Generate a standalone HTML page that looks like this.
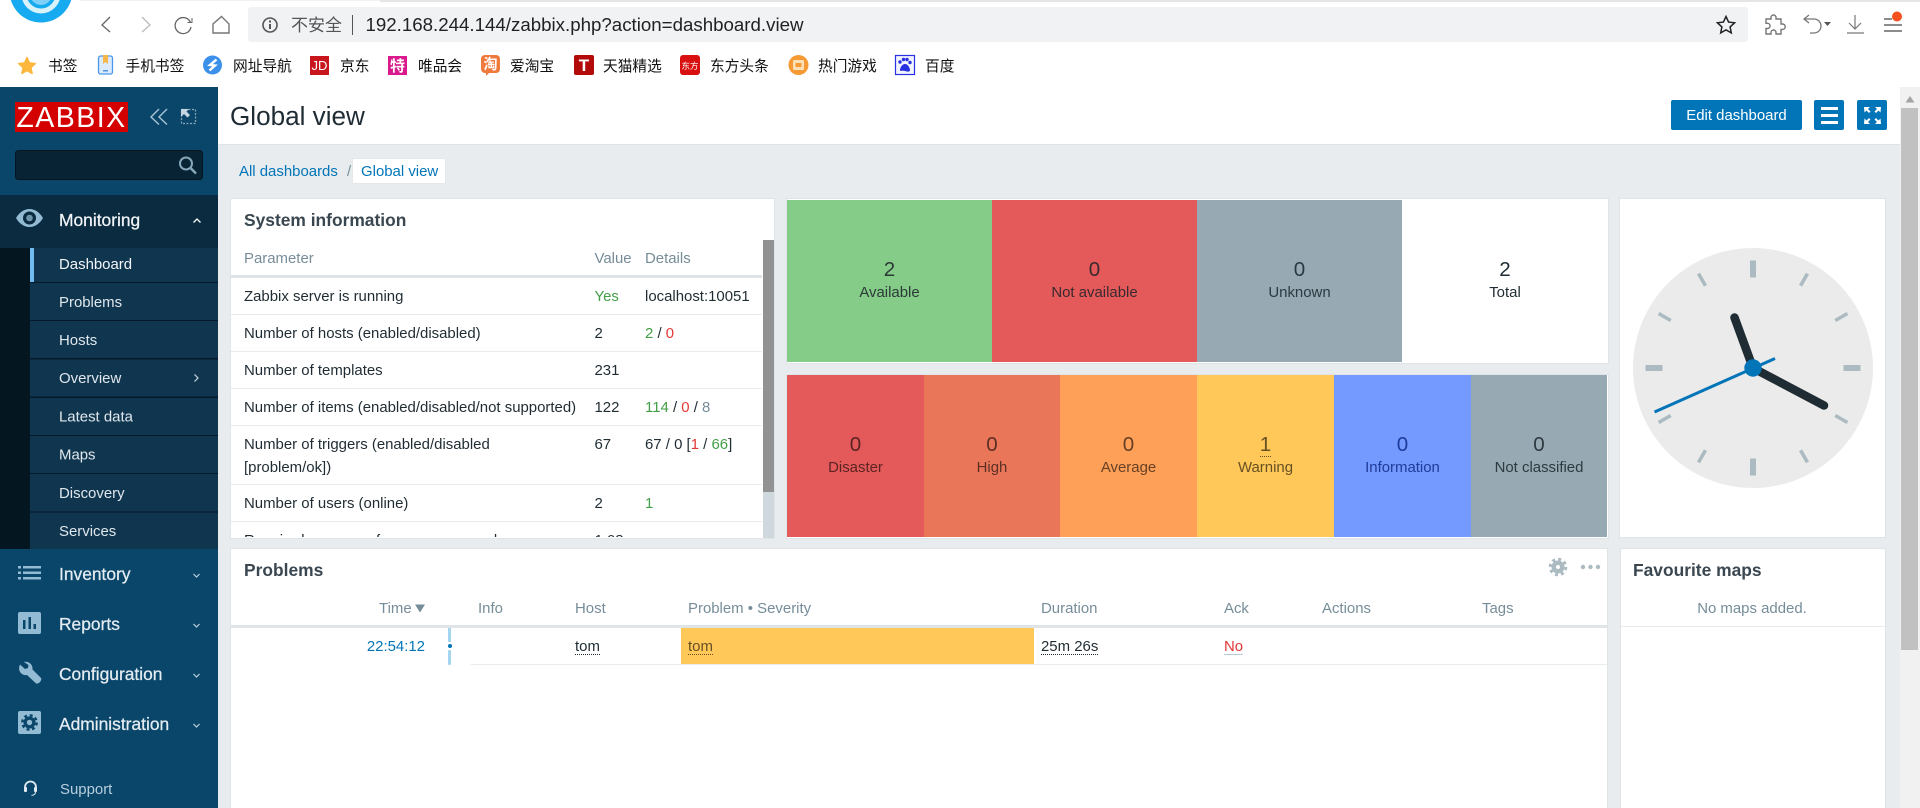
<!DOCTYPE html>
<html><head><meta charset="utf-8"><title>Global view</title>
<style>
html,body{margin:0;padding:0;width:1920px;height:808px;overflow:hidden;background:#fff}
svg{display:block;position:absolute;left:0;top:0}
text{font-family:"Liberation Sans","Noto Sans CJK SC",sans-serif;font-size:14.95px;fill:#1f2c33}
.nav{fill:#dfe7ec}
.big{font-size:17.4px;fill:#e4ecf1;stroke:#e4ecf1;stroke-width:.25px}
.h{fill:#768d99}
.b{font-size:17.4px;font-weight:bold;fill:#3a4750}
.l{fill:#0275b8}
.g{fill:#429e47}
.r{fill:#e33734}
.bm{font-size:14.7px;fill:#111}
.c{text-anchor:middle}
.n{font-size:20.6px}
</style></head><body>
<svg width="1920" height="808" viewBox="0 0 1920 808" xmlns="http://www.w3.org/2000/svg">
<defs>
<clipPath id="sc"><rect x="231" y="199" width="542" height="338"/></clipPath>
</defs>
<rect width="1920" height="808" fill="#fff"/>

<!-- browser chrome -->
<rect x="380" y="0" width="1540" height="2" fill="#e5e5e5"/>
<rect x="80" y="0" width="300" height="1" fill="#f2f2f2"/>
<circle cx="41" cy="-9" r="31.5" fill="#16aaf0"/>
<circle cx="41" cy="-6" r="17" fill="none" stroke="#d8f2fc" stroke-width="5"/>
<circle cx="41" cy="-6" r="11" fill="#7fd0f6"/>
<polyline points="110,17 102,25 110,32" fill="none" stroke="#666" stroke-width="1.3"/>
<polyline points="142,17 150,25 142,32" fill="none" stroke="#bbb" stroke-width="1.3"/>
<path d="M190.500 22.500A8 8 0 1 0 191 27" fill="none" stroke="#666" stroke-width="1.3"/>
<path d="M187.500 22.500h4.500v-4.500" fill="none" stroke="#666" stroke-width="1"/>
<path d="M213 33V24L221.500 16.500 229 24V33Z" fill="none" stroke="#777" stroke-width="1.400"/>
<rect x="248" y="7" width="1500" height="35" rx="3" fill="#f0f2f4"/>
<circle cx="270" cy="25" r="7" fill="none" stroke="#555" stroke-width="1.600"/>
<rect x="269" y="24" width="2" height="5" fill="#555"/><rect x="269" y="20.500" width="2" height="2" fill="#555"/>
<text x="291" y="31" style="font-size:17px;fill:#555">不安全</text>
<rect x="352" y="15" width="1" height="20" fill="#555"/>
<text x="365.500" y="31" textLength="438" lengthAdjust="spacingAndGlyphs" style="font-size:18.2px;fill:#222">192.168.244.144/zabbix.php?action=dashboard.view</text>
<path d="M1726 16.500l2.600 5.600 6 .7-4.500 4.100 1.200 6-5.300-3-5.300 3 1.200-6-4.500-4.100 6-.7z" fill="none" stroke="#222" stroke-width="1.500"/>
<path d="M1771 17.500a2.500 2.500 0 0 1 5 0v1.500h5v5h1.500a2.700 2.700 0 0 1 0 5.400H1781V34h-5v-1.500a2.500 2.500 0 0 0-5 0V34h-5v-5.500h1.500a2.600 2.600 0 0 0 0-5.200H1766V19h5z" fill="none" stroke="#777" stroke-width="1.400"/>
<path d="M1804 19h10a7 7 0 0 1 0 14h-4M1809 15l-5 4 5 4" fill="none" stroke="#777" stroke-width="1.300"/>
<path d="M1824 22h7l-3.500 4z" fill="#555"/>
<path d="M1855 15v14M1849 23l6 6 6-6M1847 33h17" fill="none" stroke="#777" stroke-width="1.200"/>
<path d="M1884 19h8M1884 25h18M1884 31h18" stroke="#666" stroke-width="1.400" fill="none"/>
<circle cx="1897" cy="16.500" r="5" fill="#f4511e"/>

<!-- bookmarks -->
<path d="M27 57.500l2.400 5.400 5.900.7-4.400 4 1.200 5.900-5.100-3-5.100 3 1.200-5.900-4.400-4 5.900-.7z" fill="#fcb73c" stroke="#fcb73c" stroke-width="1.500" stroke-linejoin="round"/>
<text class="bm" x="48" y="71">书签</text>
<rect x="98.500" y="56" width="14" height="18" rx="2" fill="#dbeafd" stroke="#4b97ea" stroke-width="1.300"/>
<path d="M103 55h5v9l-2.500-2-2.500 2z" fill="#f7b64a"/><rect x="103" y="70" width="5" height="1.500" fill="#4b97ea"/>
<text class="bm" x="125.500" y="71">手机书签</text>
<circle cx="212.500" cy="65" r="9.500" fill="#3b90ea"/>
<path d="M216.500 59.500l-6.500 5.500 5 .5-5.500 5" fill="none" stroke="#fff" stroke-width="2.400"/>
<text class="bm" x="233" y="71">网址导航</text>
<rect x="310" y="56" width="19" height="19" fill="#c8161e"/>
<text x="319.500" y="70" class="c" style="font-size:13px;fill:#fff">JD</text>
<text class="bm" x="340" y="71">京东</text>
<rect x="388" y="56" width="19" height="19" fill="#d9198c"/>
<text x="397.500" y="71" class="c" style="font-size:15px;font-weight:bold;fill:#fff">特</text>
<text class="bm" x="418" y="71">唯品会</text>
<rect x="481" y="55" width="19" height="18" rx="4" fill="#f0793c"/><path d="M486 72v4l4-4z" fill="#f0793c"/>
<text x="490.500" y="69" class="c" style="font-size:14px;font-weight:bold;fill:#fff">淘</text>
<text class="bm" x="510" y="71">爱淘宝</text>
<rect x="574" y="55" width="20" height="20" rx="2" fill="#b30a0a"/>
<text x="584" y="71" class="c" style="font-size:17px;font-weight:bold;fill:#fff">T</text>
<text class="bm" x="603" y="71">天猫精选</text>
<rect x="680" y="55" width="20" height="20" rx="3" fill="#d81010"/>
<text x="690" y="69" class="c" style="font-size:8.500px;fill:#fff">东方</text>
<text class="bm" x="710" y="71">东方头条</text>
<circle cx="798.500" cy="65" r="10" fill="#f59a34"/><rect x="793" y="60" width="11" height="10" rx="1" fill="#fbe0b8"/><rect x="795.500" y="63" width="6" height="4" fill="#f59a34"/>
<text class="bm" x="818" y="71">热门游戏</text>
<rect x="895.500" y="55.500" width="19" height="19" fill="#f2f4ff" stroke="#2932e1" stroke-width="1.200"/>
<path d="M905 64c3 0 5 4 5 6s-2 2-5 1-5 1-5-1 2-6 5-6z" fill="#2932e1"/><circle cx="900" cy="62" r="1.700" fill="#2932e1"/><circle cx="903.500" cy="59.500" r="1.700" fill="#2932e1"/><circle cx="907" cy="59.500" r="1.700" fill="#2932e1"/><circle cx="910" cy="62.500" r="1.700" fill="#2932e1"/>
<text class="bm" x="925" y="71">百度</text>

<!-- main bg -->
<rect x="218" y="144" width="1682" height="664" fill="#e9ecef"/>
<rect x="218" y="144" width="1682" height="1" fill="#dfe4e7"/>

<!-- sidebar -->
<rect x="0" y="87" width="218" height="721" fill="#0a466a"/>
<rect x="0" y="195" width="218" height="54" fill="#0a2b40"/>
<rect x="0" y="248" width="30" height="301" fill="#04161f"/>
<rect x="30" y="248" width="188" height="301" fill="#10354f"/>
<rect x="30" y="248" width="4" height="34" fill="#72bdf0"/>
<g fill="#06192a">
<rect x="30" y="282" width="188" height="1"/><rect x="30" y="320" width="188" height="1"/><rect x="30" y="358" width="188" height="1.500"/><rect x="30" y="396.500" width="188" height="1.500"/><rect x="30" y="435" width="188" height="1"/><rect x="30" y="473" width="188" height="1"/><rect x="30" y="511.500" width="188" height="1"/>
</g>
<rect x="15" y="102" width="113" height="30" fill="#d40000"/>
<text x="71.500" y="127" class="c" style="font-size:28.500px;fill:#fff;letter-spacing:1.500px">ZABBIX</text>
<path d="M159 109l-8 8 8 7.500M167 109l-8 8 8 7.500" fill="none" stroke="#a9c4d6" stroke-width="1.400"/>
<rect x="181.500" y="109.500" width="14" height="14" fill="none" stroke="#8aa8bb" stroke-width="1.200" stroke-dasharray="2 1.500"/>
<path d="M181 109h8l-2.500 2.500 3.500 3.500-2.500 2.500-3.500-3.500-3 3z" fill="#c5d6e2"/>
<rect x="15.500" y="150.500" width="187" height="29" rx="3" fill="#082434" stroke="#04151f"/>
<circle cx="186" cy="163.500" r="6" fill="none" stroke="#86a6b9" stroke-width="2"/><path d="M190.500 168l5.500 5.500" stroke="#86a6b9" stroke-width="2.500"/>

<path d="M16 218C23 206 36 206 43 218C36 230 23 230 16 218Z" fill="#93bcd4"/>
<circle cx="29.500" cy="218" r="6.500" fill="#0a2b40"/><circle cx="29.500" cy="218" r="3.300" fill="#6f95ab"/>
<text class="big" x="59" y="226" style="fill:#f2f5f7;stroke:#f2f5f7">Monitoring</text>
<path d="M193.500 222.500l3.500-3.500 3.500 3.500" fill="none" stroke="#fff" stroke-width="1.300"/>
<text x="59" y="269" style="fill:#f2f5f7">Dashboard</text>
<text class="nav" x="59" y="307">Problems</text>
<text class="nav" x="59" y="345">Hosts</text>
<text class="nav" x="59" y="383">Overview</text>
<path d="M194.500 374.500l3.500 3.500-3.500 3.500" fill="none" stroke="#cfdbe3" stroke-width="1.200"/>
<text class="nav" x="59" y="421.500">Latest data</text>
<text class="nav" x="59" y="459.500">Maps</text>
<text class="nav" x="59" y="498">Discovery</text>
<text class="nav" x="59" y="536">Services</text>

<g fill="#93bcd4">
<rect x="18" y="566" width="3" height="2.500"/><rect x="18" y="571.500" width="3" height="2.500"/><rect x="18" y="577" width="3" height="2.500"/>
<rect x="23" y="566" width="18" height="2.500"/><rect x="23" y="571.500" width="18" height="2.500"/><rect x="23" y="577" width="18" height="2.500"/>
<rect x="18" y="612" width="23" height="22" rx="2"/>
<rect x="18" y="711" width="23" height="23" rx="2"/>
<path d="M20 664.500L25 669 28 668 28.500 665 24 662C28 661 33 664 32.500 669.500L41 678Q42 680 39.500 682.500 37 684.500 35.500 683L27 675C22 676 17 671 20 664.500Z"/>
</g>
<g fill="#0a466a"><rect x="23" y="620" width="2.500" height="9"/><rect x="28.500" y="617" width="2.500" height="12"/><rect x="33.500" y="624" width="2.500" height="5"/></g>
<circle cx="29.500" cy="722.500" r="6" fill="#0a466a"/>
<circle cx="29.500" cy="722.500" r="7.200" fill="none" stroke="#0a466a" stroke-width="2.400" stroke-dasharray="3 2.650"/>
<circle cx="29.500" cy="722.500" r="2.700" fill="#93bcd4"/>
<text class="big" x="59" y="580">Inventory</text>
<text class="big" x="59" y="630">Reports</text>
<text class="big" x="59" y="680">Configuration</text>
<text class="big" x="59" y="730">Administration</text>
<g fill="none" stroke="#bcd0dc" stroke-width="1.200">
<path d="M193.500 574l3 3 3-3"/><path d="M193.500 624l3 3 3-3"/><path d="M193.500 674l3 3 3-3"/><path d="M193.500 724l3 3 3-3"/>
</g>
<path d="M25 790v-3a5.500 5.500 0 0 1 11 0v3" fill="none" stroke="#e2ebf1" stroke-width="1.800"/>
<rect x="24" y="787" width="3" height="5" rx="1" fill="#e2ebf1"/><rect x="34" y="787" width="3" height="5" rx="1" fill="#e2ebf1"/><path d="M35.500 792q0 3-4 3.500" fill="none" stroke="#e2ebf1" stroke-width="1"/>
<text x="60" y="794" style="fill:#b7cede">Support</text>

<!-- header -->
<text x="230" y="125" style="font-size:26.100px;fill:#1f2c33">Global view</text>
<rect x="1671" y="100" width="131" height="30" rx="2" fill="#0275b8"/>
<text x="1736.500" y="120" class="c" style="fill:#fff">Edit dashboard</text>
<rect x="1814" y="100" width="30" height="30" rx="2" fill="#0275b8"/>
<rect x="1821" y="107" width="17" height="3" fill="#fff"/><rect x="1821" y="114" width="17" height="3" fill="#fff"/><rect x="1821" y="121" width="17" height="3" fill="#fff"/>
<rect x="1857" y="100" width="30" height="30" rx="2" fill="#0275b8"/>
<g fill="#fff">
<path d="M1864 107h6l-2 2 2.500 2.500-1.500 1.500-2.500-2.500-2 2z"/>
<path d="M1881 107h-6l2 2-2.500 2.500 1.500 1.500 2.500-2.500 2 2z"/>
<path d="M1864 124h6l-2-2 2.500-2.500-1.500-1.500-2.500 2.500-2-2z"/>
<path d="M1881 124h-6l2-2-2.500-2.500 1.500-1.500 2.500 2.500 2-2z"/>
</g>
<!-- page scrollbar -->
<rect x="1900" y="87" width="20" height="721" fill="#f1f1f1"/>
<path d="M1905.500 102.500h9l-4.500-6.500z" fill="#a3a3a3"/>
<rect x="1901" y="108" width="17" height="542" fill="#c1c1c1"/>

<!-- breadcrumbs -->
<text class="l" x="239" y="176">All dashboards</text>
<text x="347" y="176" style="fill:#768d99">/</text>
<rect x="352.500" y="158.500" width="93" height="25" rx="1" fill="#fff" stroke="#e4e8ea"/>
<text class="l" x="361" y="176">Global view</text>

<!-- System information -->
<rect x="230.500" y="198.500" width="544" height="340" fill="#fff" stroke="#dfe4e7"/>
<text class="b" x="244" y="226">System information</text>
<g clip-path="url(#sc)">
<text class="h" x="244" y="263">Parameter</text><text class="h" x="594.500" y="263">Value</text><text class="h" x="645" y="263">Details</text>
<rect x="231" y="275" width="531" height="3" fill="#dfe4e7"/>
<g fill="#e9ecef"><rect x="231" y="314" width="531" height="1"/><rect x="231" y="351" width="531" height="1"/><rect x="231" y="388" width="531" height="1"/><rect x="231" y="425" width="531" height="1"/><rect x="231" y="484" width="531" height="1"/><rect x="231" y="521" width="531" height="1"/></g>
<text x="244" y="301">Zabbix server is running</text><text class="g" x="594.500" y="301">Yes</text><text x="645" y="301">localhost:10051</text>
<text x="244" y="338">Number of hosts (enabled/disabled)</text><text x="594.500" y="338">2</text><text x="645" y="338"><tspan class="g">2</tspan> / <tspan class="r">0</tspan></text>
<text x="244" y="375">Number of templates</text><text x="594.500" y="375">231</text>
<text x="244" y="412">Number of items (enabled/disabled/not supported)</text><text x="594.500" y="412">122</text><text x="645" y="412"><tspan class="g">114</tspan> / <tspan class="r">0</tspan> / <tspan class="h">8</tspan></text>
<text x="244" y="449">Number of triggers (enabled/disabled</text><text x="244" y="472">[problem/ok])</text><text x="594.500" y="449">67</text><text x="645" y="449">67 / 0 [<tspan class="r">1</tspan> / <tspan class="g">66</tspan>]</text>
<text x="244" y="508">Number of users (online)</text><text x="594.500" y="508">2</text><text class="g" x="645" y="508">1</text>
<text x="244" y="545">Required server performance, new values</text><text x="594.500" y="545">1.08</text>
</g>
<rect x="763" y="240" width="11" height="298" fill="#cfd8dd"/>
<rect x="763" y="240" width="11" height="252" fill="#929292"/>

<!-- host availability -->
<rect x="786.500" y="198.500" width="822" height="165" fill="#fff" stroke="#dfe4e7"/>
<rect x="787" y="200" width="205" height="162" fill="#86cc89"/>
<rect x="992" y="200" width="205" height="162" fill="#e45959"/>
<rect x="1197" y="200" width="205" height="162" fill="#97aab3"/>
<text class="c n" x="889.500" y="276" style="fill:#2b3a36">2</text><text class="c" x="889.500" y="297" style="fill:#2b3a36">Available</text>
<text class="c n" x="1094.500" y="276" style="fill:#3a2a30">0</text><text class="c" x="1094.500" y="297" style="fill:#3a2a30">Not available</text>
<text class="c n" x="1299.500" y="276" style="fill:#2b3a42">0</text><text class="c" x="1299.500" y="297" style="fill:#2b3a42">Unknown</text>
<text class="c n" x="1505" y="276">2</text><text class="c" x="1505" y="297">Total</text>

<!-- severities -->
<rect x="786.500" y="374.500" width="822" height="164" fill="#fff" stroke="#dfe4e7"/>
<rect x="787" y="375" width="137" height="162" fill="#e45959"/>
<rect x="924" y="375" width="136" height="162" fill="#e97659"/>
<rect x="1060" y="375" width="137" height="162" fill="#ffa059"/>
<rect x="1197" y="375" width="137" height="162" fill="#ffc859"/>
<rect x="1334" y="375" width="137" height="162" fill="#7499ff"/>
<rect x="1471" y="375" width="136" height="162" fill="#97aab3"/>
<text class="c n" x="855.500" y="451" style="fill:#5b2424">0</text><text class="c" x="855.500" y="472" style="fill:#5b2424">Disaster</text>
<text class="c n" x="992" y="451" style="fill:#5d2f24">0</text><text class="c" x="992" y="472" style="fill:#5d2f24">High</text>
<text class="c n" x="1128.500" y="451" style="fill:#664024">0</text><text class="c" x="1128.500" y="472" style="fill:#664024">Average</text>
<text class="c n" x="1265.500" y="451" style="fill:#665024">1</text><text class="c" x="1265.500" y="472" style="fill:#665024">Warning</text>
<path d="M1260 456.500h11" stroke="#665024" stroke-dasharray="1 1" fill="none"/>
<text class="c n" x="1402.500" y="451" style="fill:#1f3c99">0</text><text class="c" x="1402.500" y="472" style="fill:#1f3c99">Information</text>
<text class="c n" x="1539" y="451" style="fill:#2d3a42">0</text><text class="c" x="1539" y="472" style="fill:#2d3a42">Not classified</text>

<!-- clock -->
<rect x="1619.500" y="198.500" width="266" height="339" fill="#fff" stroke="#dfe4e7"/>
<circle cx="1753" cy="368" r="120" fill="#ebebeb"/>
<g fill="#acbbc2">
<rect x="1750" y="260.500" width="6" height="17"/>
<rect x="1750" y="260.500" width="6" height="17" transform="rotate(90 1753 368)"/>
<rect x="1750" y="260.500" width="6" height="17" transform="rotate(180 1753 368)"/>
<rect x="1750" y="260.500" width="6" height="17" transform="rotate(270 1753 368)"/>
<rect x="1751.200" y="259" width="3.600" height="14" transform="rotate(30 1753 368)"/>
<rect x="1751.200" y="259" width="3.600" height="14" transform="rotate(60 1753 368)"/>
<rect x="1751.200" y="259" width="3.600" height="14" transform="rotate(120 1753 368)"/>
<rect x="1751.200" y="259" width="3.600" height="14" transform="rotate(150 1753 368)"/>
<rect x="1751.200" y="259" width="3.600" height="14" transform="rotate(210 1753 368)"/>
<rect x="1751.200" y="259" width="3.600" height="14" transform="rotate(240 1753 368)"/>
<rect x="1751.200" y="259" width="3.600" height="14" transform="rotate(300 1753 368)"/>
<rect x="1751.200" y="259" width="3.600" height="14" transform="rotate(330 1753 368)"/>
</g>
<path d="M1753 368L1734.500 317.500M1753 368L1824 405.500" stroke="#1f2c33" stroke-width="8.500" stroke-linecap="round" fill="none"/>
<path d="M1654.500 412L1775 358.500" stroke="#0275b8" stroke-width="3" fill="none"/>
<circle cx="1753" cy="368" r="8.700" fill="#0275b8"/>

<!-- problems -->
<rect x="230.500" y="548.500" width="1377" height="270" fill="#fff" stroke="#dfe4e7"/>
<text class="b" x="244" y="576">Problems</text>
<text class="h" x="379" y="613">Time</text>
<path d="M415 604.500h10l-5 8z" fill="#768d99"/>
<text class="h" x="478" y="613">Info</text>
<text class="h" x="575" y="613">Host</text>
<text class="h" x="688" y="613">Problem • Severity</text>
<text class="h" x="1041" y="613">Duration</text>
<text class="h" x="1224" y="613">Ack</text>
<text class="h" x="1322" y="613">Actions</text>
<text class="h" x="1482" y="613">Tags</text>
<rect x="231" y="625" width="1376" height="3" fill="#dfe4e7"/>
<rect x="681" y="628" width="353" height="36" fill="#ffc859"/>
<rect x="471" y="664" width="1136" height="1" fill="#e9ecef"/>
<text class="l" x="425" y="651" text-anchor="end">22:54:12</text>
<rect x="448" y="628" width="3" height="14" fill="#a6d5f0"/><rect x="448" y="650" width="3" height="15" rx="1" fill="#a6d5f0"/>
<circle cx="450" cy="646" r="2" fill="#0275b8"/>
<text x="575" y="651">tom</text>
<path d="M575 654.500h25" stroke="#1f2c33" stroke-dasharray="1 1" fill="none"/>
<text x="688" y="651" style="fill:#665024">tom</text>
<path d="M688 654.500h25" stroke="#665024" stroke-dasharray="1 1" fill="none"/>
<text x="1041" y="651">25m 26s</text>
<path d="M1041 654.500h58" stroke="#1f2c33" stroke-dasharray="1 1" fill="none"/>
<text class="r" x="1224" y="651">No</text>
<rect x="1224" y="654" width="19" height="1" fill="#bccbd6"/>
<circle cx="1558" cy="567" r="6.500" fill="#acbbc2"/>
<circle cx="1558" cy="567" r="7.800" fill="none" stroke="#acbbc2" stroke-width="3" stroke-dasharray="3 3.120"/>
<circle cx="1558" cy="567" r="2" fill="#fff"/>
<circle cx="1583" cy="567" r="2.200" fill="#acbbc2"/><circle cx="1590.500" cy="567" r="2.200" fill="#acbbc2"/><circle cx="1598" cy="567" r="2.200" fill="#acbbc2"/>

<!-- favourite maps -->
<rect x="1620.500" y="548.500" width="265" height="270" fill="#fff" stroke="#dfe4e7"/>
<text class="b" x="1633" y="576">Favourite maps</text>
<text class="h c" x="1752" y="613">No maps added.</text>
<rect x="1621" y="626" width="264" height="1" fill="#e9ecef"/>
</svg>
</body></html>
